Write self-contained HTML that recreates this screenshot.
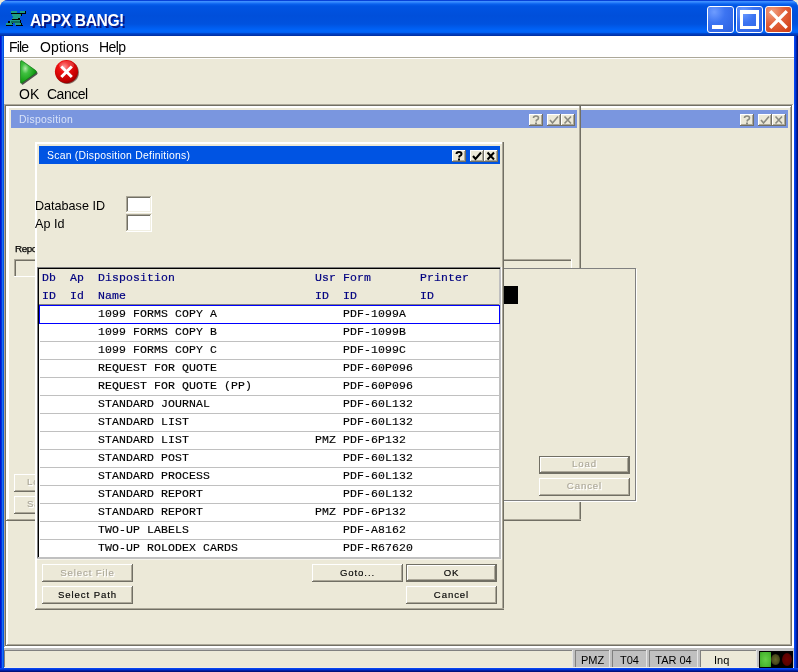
<!DOCTYPE html>
<html><head><meta charset="utf-8"><style>
html,body{margin:0;padding:0;}
body{width:798px;height:672px;position:relative;overflow:hidden;background:#ECE9D8;}
div{position:absolute;box-sizing:border-box;}
.t{white-space:pre;will-change:transform;}
</style></head><body>
<div style="left:0;top:0;width:798px;height:672px;border-radius:8px 8px 0 0;background:#0855DD;"></div>
<div style="left:0px;top:30px;width:1px;height:642px;background:#0014CC;"></div>
<div style="left:1px;top:30px;width:1px;height:642px;background:#0030DC;"></div>
<div style="left:2px;top:30px;width:1px;height:642px;background:#1A6EF2;"></div>
<div style="left:3px;top:30px;width:1px;height:642px;background:#0052E6;"></div>
<div style="left:794px;top:30px;width:1px;height:642px;background:#0546F2;"></div>
<div style="left:795px;top:30px;width:1px;height:642px;background:#0038D8;"></div>
<div style="left:796px;top:30px;width:1px;height:642px;background:#0020A8;"></div>
<div style="left:797px;top:30px;width:1px;height:642px;background:#00127A;"></div>
<div style="left:0;top:0;width:798px;height:36px;border-radius:8px 8px 0 0;background:linear-gradient(to bottom,#0842D8 0px,#0842D8 0.5px,#3D8FFF 1.5px,#2B80FB 2.5px,#0A62EE 4px,#0054E2 6px,#004FDA 16px,#0052DE 24px,#005EF0 28px,#0066FC 31px,#0060F2 32.5px,#0046CC 33.5px,#0032A8 35.5px);"></div>
<div style="left:0;top:668px;width:798px;height:4px;background:linear-gradient(to bottom,#0844F0 0,#0844F0 0.5px,#0036D8 1.5px,#0020A8 2.5px,#00127A 3.5px);"></div>
<svg style="position:absolute;left:0;top:0" width="30" height="30" viewBox="0 0 30 30" shape-rendering="crispEdges"><rect x="11" y="11" width="6" height="2" fill="#1E9C86"/><rect x="20" y="11" width="5" height="2" fill="#1E9C86"/><rect x="12" y="14" width="9" height="2" fill="#1E9C86"/><rect x="13" y="16" width="7" height="2" fill="#1E9C86"/><rect x="12" y="18" width="6" height="1" fill="#1E9C86"/><rect x="10" y="20" width="10" height="3" fill="#1E9C86"/><rect x="6" y="23" width="6" height="2" fill="#1E9C86"/><rect x="15" y="23" width="6" height="2" fill="#1E9C86"/><rect x="11" y="21" width="9" height="2" fill="#0E6A5A"/><rect x="11" y="13" width="7" height="1" fill="#000"/><rect x="18" y="13" width="8" height="1" fill="#000"/><rect x="25" y="11" width="1" height="2" fill="#000"/><rect x="21" y="14" width="1" height="2" fill="#000"/><rect x="18" y="18" width="2" height="1" fill="#000"/><rect x="12" y="19" width="8" height="1" fill="#000"/><rect x="8" y="21" width="2" height="2" fill="#000"/><rect x="20" y="20" width="1" height="3" fill="#000"/><rect x="6" y="25" width="7" height="1" fill="#000"/><rect x="16" y="25" width="7" height="1" fill="#000"/><rect x="21" y="23" width="1" height="2" fill="#000"/><rect x="12" y="23" width="1" height="1" fill="#000"/></svg>
<div class="t" style="left:31px;top:14.29px;font-family:'Liberation Sans', sans-serif;font-size:15.6px;line-height:15.6px;color:#0A1883;font-weight:bold;transform:translate(1px,1px);letter-spacing:-0.4px;">APPX BANG!</div>
<div class="t" style="left:30px;top:13.29px;font-family:'Liberation Sans', sans-serif;font-size:15.6px;line-height:15.6px;color:#FFFFFF;font-weight:bold;letter-spacing:-0.4px;">APPX BANG!</div>
<div style="left:707px;top:6px;width:27px;height:27px;border:1px solid #FFFFFF;border-radius:3px;background:radial-gradient(circle at 25% 20%,#6E9CFF 0,#3C74F2 40%,#2A5FE0 100%);"></div>
<div style="left:736px;top:6px;width:27px;height:27px;border:1px solid #FFFFFF;border-radius:3px;background:radial-gradient(circle at 25% 20%,#6E9CFF 0,#3C74F2 40%,#2A5FE0 100%);"></div>
<div style="left:765px;top:6px;width:27px;height:27px;border:1px solid #FFFFFF;border-radius:3px;background:radial-gradient(circle at 25% 20%,#F0A080 0,#E2603A 45%,#CC3A10 100%);"></div>
<div style="left:712px;top:25px;width:11px;height:4px;background:#FFFFFF;"></div>
<div style="left:740px;top:10px;width:19px;height:19px;border:3px solid #FFFFFF;border-top-width:4px;"></div>
<svg style="position:absolute;left:765px;top:6px" width="27" height="27" viewBox="0 0 27 27">
<path d="M5.2 5.2 L21.8 21.8 M21.8 5.2 L5.2 21.8" stroke="#FFFFFF" stroke-width="3.3"/></svg>
<div style="left:4px;top:36px;width:790px;height:21px;background:#FFFFFF;"></div>
<div class="t" style="left:9px;top:40.15px;font-family:'Liberation Sans', sans-serif;font-size:14px;line-height:14px;color:#000;font-weight:normal;letter-spacing:-0.8px;">File</div>
<div class="t" style="left:40px;top:40.15px;font-family:'Liberation Sans', sans-serif;font-size:14px;line-height:14px;color:#000;font-weight:normal;letter-spacing:0.1px;">Options</div>
<div class="t" style="left:99px;top:40.15px;font-family:'Liberation Sans', sans-serif;font-size:14px;line-height:14px;color:#000;font-weight:normal;letter-spacing:-0.6px;">Help</div>
<div style="left:4px;top:57px;width:790px;height:1px;background:#ACA899;"></div>
<div style="left:4px;top:58px;width:790px;height:1px;background:#FFFFFF;"></div>
<div style="left:4px;top:59px;width:790px;height:45px;background:#ECE9D8;"></div>
<svg style="position:absolute;left:16px;top:58px" width="28" height="30" viewBox="0 0 28 30">
<defs><radialGradient id="gg" cx="0.3" cy="0.35" r="0.75"><stop offset="0" stop-color="#B0E8A8"/><stop offset="0.3" stop-color="#40C040"/><stop offset="0.75" stop-color="#18A018"/><stop offset="1" stop-color="#0A8010"/></radialGradient></defs>
<path d="M4.5 3.8 Q4.5 2.0 6.3 3.0 L19.8 12.6 Q21.2 13.9 19.8 15.1 L6.3 24.7 Q4.5 26.1 4.5 24.3 Z" fill="#404040" transform="translate(1.2,1.5)" opacity="0.9"/>
<path d="M4.5 3.8 Q4.5 2.0 6.3 3.0 L19.8 12.6 Q21.2 13.9 19.8 15.1 L6.3 24.7 Q4.5 26.1 4.5 24.3 Z" fill="url(#gg)" stroke="#0C7A10" stroke-width="0.7"/>
</svg>
<svg style="position:absolute;left:52px;top:57px" width="30" height="30" viewBox="0 0 30 30">
<defs><radialGradient id="rg" cx="0.4" cy="0.3" r="0.75"><stop offset="0" stop-color="#FF8080"/><stop offset="0.3" stop-color="#F01010"/><stop offset="0.8" stop-color="#C00000"/><stop offset="1" stop-color="#800000"/></radialGradient></defs>
<circle cx="15.3" cy="15.4" r="11.6" fill="#3A1A14" opacity="0.6"/>
<circle cx="14.5" cy="14.6" r="11.6" fill="url(#rg)"/><ellipse cx="14.5" cy="8.2" rx="7.5" ry="4.2" fill="#FFFFFF" opacity="0.18"/>
<path d="M9.3 9.5 L19.8 20 M19.8 9.5 L9.3 20" stroke="#FFFFFF" stroke-width="3" stroke-linecap="butt"/>
</svg>
<div class="t" style="left:19px;top:86.65px;font-family:'Liberation Sans', sans-serif;font-size:14px;line-height:14px;color:#000;font-weight:normal;letter-spacing:0.1px;">OK</div>
<div class="t" style="left:47px;top:86.65px;font-family:'Liberation Sans', sans-serif;font-size:14px;line-height:14px;color:#000;font-weight:normal;letter-spacing:-0.5px;">Cancel</div>
<div style="left:4px;top:104px;width:790px;height:1px;background:#ACA899;"></div>
<div style="left:4px;top:105px;width:790px;height:1px;background:#716F64;"></div>
<div style="left:4px;top:104px;width:1px;height:544px;background:#ACA899;"></div>
<div style="left:5px;top:105px;width:1px;height:542px;background:#716F64;"></div>
<div style="left:4px;top:647px;width:790px;height:1px;background:#FFFFFF;"></div>
<div style="left:5px;top:646px;width:788px;height:1px;background:#FFFFFF;"></div>
<div style="left:793px;top:104px;width:1px;height:544px;background:#FFFFFF;"></div>
<div style="left:792px;top:105px;width:1px;height:542px;background:#FFFFFF;"></div>
<div style="left:6px;top:106px;width:786px;height:540px;background:#ECE9D8;"></div>
<div style="left:6px;top:106px;width:786px;height:1px;background:#FFFFFF;"></div>
<div style="left:6px;top:107px;width:785px;height:1px;background:#FFFFFF;"></div>
<div style="left:6px;top:106px;width:1px;height:540px;background:#FFFFFF;"></div>
<div style="left:7px;top:106px;width:1px;height:539px;background:#FFFFFF;"></div>
<div style="left:8px;top:108px;width:1px;height:413px;background:#FFFFFF;"></div>
<div style="left:6px;top:645px;width:786px;height:1px;background:#716F64;"></div>
<div style="left:7px;top:644px;width:784px;height:1px;background:#ACA899;"></div>
<div style="left:791px;top:106px;width:1px;height:540px;background:#716F64;"></div>
<div style="left:790px;top:107px;width:1px;height:538px;background:#ACA899;"></div>
<div style="left:581px;top:110px;width:207px;height:18px;background:#7A96DF;"></div>
<div style="left:772px;top:114px;width:14px;height:12px;background:#ECE9D8;"></div>
<div style="left:772px;top:114px;width:14px;height:1px;background:#FFFFFF;"></div>
<div style="left:772px;top:114px;width:1px;height:12px;background:#FFFFFF;"></div>
<div style="left:772px;top:125px;width:14px;height:1px;background:#716F64;"></div>
<div style="left:785px;top:114px;width:1px;height:12px;background:#716F64;"></div>
<div style="left:784px;top:115px;width:1px;height:10px;background:#ACA899;"></div>
<div style="left:773px;top:124px;width:12px;height:1px;background:#ACA899;"></div>
<svg style="position:absolute;left:772px;top:114px" width="14" height="12" viewBox="0 0 14 12"><path d="M3.5 2.5 L10 9.5 M10 2.5 L3.5 9.5" stroke="#8A8A80" stroke-width="1.6"/></svg>
<div style="left:758px;top:114px;width:14px;height:12px;background:#ECE9D8;"></div>
<div style="left:758px;top:114px;width:14px;height:1px;background:#FFFFFF;"></div>
<div style="left:758px;top:114px;width:1px;height:12px;background:#FFFFFF;"></div>
<div style="left:758px;top:125px;width:14px;height:1px;background:#716F64;"></div>
<div style="left:771px;top:114px;width:1px;height:12px;background:#716F64;"></div>
<div style="left:770px;top:115px;width:1px;height:10px;background:#ACA899;"></div>
<div style="left:759px;top:124px;width:12px;height:1px;background:#ACA899;"></div>
<svg style="position:absolute;left:758px;top:114px" width="14" height="12" viewBox="0 0 14 12"><path d="M3 6 L5.5 9 L11 2.5" fill="none" stroke="#8A8A80" stroke-width="1.6"/></svg>
<div style="left:740px;top:114px;width:14px;height:12px;background:#ECE9D8;"></div>
<div style="left:740px;top:114px;width:14px;height:1px;background:#FFFFFF;"></div>
<div style="left:740px;top:114px;width:1px;height:12px;background:#FFFFFF;"></div>
<div style="left:740px;top:125px;width:14px;height:1px;background:#716F64;"></div>
<div style="left:753px;top:114px;width:1px;height:12px;background:#716F64;"></div>
<div style="left:752px;top:115px;width:1px;height:10px;background:#ACA899;"></div>
<div style="left:741px;top:124px;width:12px;height:1px;background:#ACA899;"></div>
<svg style="position:absolute;left:740px;top:114px" width="14" height="12" viewBox="0 0 14 12"><path d="M4.5 4 Q4.5 2 7 2 Q9.5 2 9.5 4 Q9.5 5.3 7.5 6.2 L7 7.5" fill="none" stroke="#8A8A80" stroke-width="1.6"/><rect x="6" y="8.5" width="2" height="2" fill="#8A8A80"/></svg>
<div style="left:579px;top:106px;width:1px;height:415px;background:#ACA899;"></div>
<div style="left:580px;top:106px;width:1px;height:415px;background:#716F64;"></div>
<div style="left:7px;top:519px;width:574px;height:1px;background:#ACA899;"></div>
<div style="left:6px;top:520px;width:575px;height:1px;background:#716F64;"></div>
<div style="left:11px;top:110px;width:566px;height:18px;background:#7A96DF;"></div>
<div class="t" style="left:18.5px;top:115.19px;font-family:'Liberation Sans', sans-serif;font-size:10.4px;line-height:10.4px;color:#D8E2F8;font-weight:normal;letter-spacing:0.3px;">Disposition</div>
<div style="left:561px;top:114px;width:14px;height:12px;background:#ECE9D8;"></div>
<div style="left:561px;top:114px;width:14px;height:1px;background:#FFFFFF;"></div>
<div style="left:561px;top:114px;width:1px;height:12px;background:#FFFFFF;"></div>
<div style="left:561px;top:125px;width:14px;height:1px;background:#716F64;"></div>
<div style="left:574px;top:114px;width:1px;height:12px;background:#716F64;"></div>
<div style="left:573px;top:115px;width:1px;height:10px;background:#ACA899;"></div>
<div style="left:562px;top:124px;width:12px;height:1px;background:#ACA899;"></div>
<svg style="position:absolute;left:561px;top:114px" width="14" height="12" viewBox="0 0 14 12"><path d="M3.5 2.5 L10 9.5 M10 2.5 L3.5 9.5" stroke="#8A8A80" stroke-width="1.6"/></svg>
<div style="left:547px;top:114px;width:14px;height:12px;background:#ECE9D8;"></div>
<div style="left:547px;top:114px;width:14px;height:1px;background:#FFFFFF;"></div>
<div style="left:547px;top:114px;width:1px;height:12px;background:#FFFFFF;"></div>
<div style="left:547px;top:125px;width:14px;height:1px;background:#716F64;"></div>
<div style="left:560px;top:114px;width:1px;height:12px;background:#716F64;"></div>
<div style="left:559px;top:115px;width:1px;height:10px;background:#ACA899;"></div>
<div style="left:548px;top:124px;width:12px;height:1px;background:#ACA899;"></div>
<svg style="position:absolute;left:547px;top:114px" width="14" height="12" viewBox="0 0 14 12"><path d="M3 6 L5.5 9 L11 2.5" fill="none" stroke="#8A8A80" stroke-width="1.6"/></svg>
<div style="left:529px;top:114px;width:14px;height:12px;background:#ECE9D8;"></div>
<div style="left:529px;top:114px;width:14px;height:1px;background:#FFFFFF;"></div>
<div style="left:529px;top:114px;width:1px;height:12px;background:#FFFFFF;"></div>
<div style="left:529px;top:125px;width:14px;height:1px;background:#716F64;"></div>
<div style="left:542px;top:114px;width:1px;height:12px;background:#716F64;"></div>
<div style="left:541px;top:115px;width:1px;height:10px;background:#ACA899;"></div>
<div style="left:530px;top:124px;width:12px;height:1px;background:#ACA899;"></div>
<svg style="position:absolute;left:529px;top:114px" width="14" height="12" viewBox="0 0 14 12"><path d="M4.5 4 Q4.5 2 7 2 Q9.5 2 9.5 4 Q9.5 5.3 7.5 6.2 L7 7.5" fill="none" stroke="#8A8A80" stroke-width="1.6"/><rect x="6" y="8.5" width="2" height="2" fill="#8A8A80"/></svg>
<div class="t" style="left:15px;top:243.70px;font-family:'Liberation Sans', sans-serif;font-size:9.8px;line-height:9.8px;color:#000;font-weight:normal;letter-spacing:-0.4px;-webkit-text-stroke:0.25px #000;">Repo</div>
<div style="left:14px;top:259px;width:558px;height:18px;background:#ECE9D8;"></div>
<div style="left:14px;top:259px;width:558px;height:1px;background:#ACA899;"></div>
<div style="left:15px;top:260px;width:556px;height:1px;background:#716F64;"></div>
<div style="left:14px;top:259px;width:1px;height:18px;background:#ACA899;"></div>
<div style="left:15px;top:260px;width:1px;height:16px;background:#716F64;"></div>
<div style="left:14px;top:276px;width:558px;height:1px;background:#FFFFFF;"></div>
<div style="left:571px;top:259px;width:1px;height:18px;background:#FFFFFF;"></div>
<div style="left:14px;top:474px;width:60px;height:18px;background:#ECE9D8;"></div>
<div style="left:14px;top:474px;width:60px;height:1px;background:#FFFFFF;"></div>
<div style="left:14px;top:474px;width:1px;height:18px;background:#FFFFFF;"></div>
<div style="left:14px;top:491px;width:60px;height:1px;background:#716F64;"></div>
<div style="left:73px;top:474px;width:1px;height:18px;background:#716F64;"></div>
<div style="left:15px;top:490px;width:58px;height:1px;background:#ACA899;"></div>
<div style="left:72px;top:475px;width:1px;height:16px;background:#ACA899;"></div>
<div class="t" style="left:27px;top:478.37px;font-family:'Liberation Sans', sans-serif;font-size:9.6px;line-height:9.6px;color:#FFFFFF;font-weight:normal;letter-spacing:0.9px;transform:translateX(1px);-webkit-text-stroke:0.35px #FFF;">Load</div>
<div class="t" style="left:27px;top:477.37px;font-family:'Liberation Sans', sans-serif;font-size:9.6px;line-height:9.6px;color:#ACA899;font-weight:normal;letter-spacing:0.9px;-webkit-text-stroke:0.15px #ACA899;">Load</div>
<div style="left:14px;top:496px;width:60px;height:18px;background:#ECE9D8;"></div>
<div style="left:14px;top:496px;width:60px;height:1px;background:#FFFFFF;"></div>
<div style="left:14px;top:496px;width:1px;height:18px;background:#FFFFFF;"></div>
<div style="left:14px;top:513px;width:60px;height:1px;background:#716F64;"></div>
<div style="left:73px;top:496px;width:1px;height:18px;background:#716F64;"></div>
<div style="left:15px;top:512px;width:58px;height:1px;background:#ACA899;"></div>
<div style="left:72px;top:497px;width:1px;height:16px;background:#ACA899;"></div>
<div class="t" style="left:27px;top:500.37px;font-family:'Liberation Sans', sans-serif;font-size:9.6px;line-height:9.6px;color:#FFFFFF;font-weight:normal;letter-spacing:0.9px;transform:translateX(1px);-webkit-text-stroke:0.35px #FFF;">Save</div>
<div class="t" style="left:27px;top:499.37px;font-family:'Liberation Sans', sans-serif;font-size:9.6px;line-height:9.6px;color:#ACA899;font-weight:normal;letter-spacing:0.9px;-webkit-text-stroke:0.15px #ACA899;">Save</div>
<div style="left:40px;top:268px;width:596px;height:234px;border:1px solid #FFFFFF;left:41px;top:269px;width:596px;height:233px;"></div>
<div style="left:40px;top:268px;width:596px;height:233px;background:#ECE9D8;border:1px solid #808080;"></div>
<div style="left:504px;top:286px;width:14px;height:18px;background:#000000;"></div>
<div style="left:539px;top:456px;width:91px;height:18px;background:#716F64;"></div>
<div style="left:540px;top:457px;width:89px;height:16px;background:#ECE9D8;"></div>
<div style="left:540px;top:457px;width:89px;height:1px;background:#FFFFFF;"></div>
<div style="left:540px;top:457px;width:1px;height:16px;background:#FFFFFF;"></div>
<div style="left:540px;top:472px;width:89px;height:1px;background:#716F64;"></div>
<div style="left:628px;top:457px;width:1px;height:16px;background:#716F64;"></div>
<div style="left:541px;top:471px;width:87px;height:1px;background:#ACA899;"></div>
<div style="left:627px;top:458px;width:1px;height:14px;background:#ACA899;"></div>
<div class="t" style="left:539px;width:91px;text-align:center;top:459.87px;font-family:'Liberation Sans', sans-serif;font-size:9.6px;line-height:9.6px;color:#FFFFFF;font-weight:normal;letter-spacing:0.9px;transform:translateX(1px);-webkit-text-stroke:0.35px #FFF;">Load</div>
<div class="t" style="left:539px;width:91px;text-align:center;top:458.87px;font-family:'Liberation Sans', sans-serif;font-size:9.6px;line-height:9.6px;color:#ACA899;font-weight:normal;letter-spacing:0.9px;-webkit-text-stroke:0.15px #ACA899;">Load</div>
<div style="left:539px;top:478px;width:91px;height:18px;background:#ECE9D8;"></div>
<div style="left:539px;top:478px;width:91px;height:1px;background:#FFFFFF;"></div>
<div style="left:539px;top:478px;width:1px;height:18px;background:#FFFFFF;"></div>
<div style="left:539px;top:495px;width:91px;height:1px;background:#716F64;"></div>
<div style="left:629px;top:478px;width:1px;height:18px;background:#716F64;"></div>
<div style="left:540px;top:494px;width:89px;height:1px;background:#ACA899;"></div>
<div style="left:628px;top:479px;width:1px;height:16px;background:#ACA899;"></div>
<div class="t" style="left:539px;width:91px;text-align:center;top:481.87px;font-family:'Liberation Sans', sans-serif;font-size:9.6px;line-height:9.6px;color:#FFFFFF;font-weight:normal;letter-spacing:0.9px;transform:translateX(1px);-webkit-text-stroke:0.35px #FFF;">Cancel</div>
<div class="t" style="left:539px;width:91px;text-align:center;top:480.87px;font-family:'Liberation Sans', sans-serif;font-size:9.6px;line-height:9.6px;color:#ACA899;font-weight:normal;letter-spacing:0.9px;-webkit-text-stroke:0.15px #ACA899;">Cancel</div>
<div style="left:35px;top:142px;width:469px;height:468px;background:#ECE9D8;"></div>
<div style="left:35px;top:142px;width:468px;height:1px;background:#FFFFFF;"></div>
<div style="left:35px;top:143px;width:467px;height:1px;background:#FFFFFF;"></div>
<div style="left:35px;top:142px;width:1px;height:467px;background:#FFFFFF;"></div>
<div style="left:36px;top:142px;width:1px;height:466px;background:#FFFFFF;"></div>
<div style="left:502px;top:142px;width:1px;height:468px;background:#ACA899;"></div>
<div style="left:503px;top:142px;width:1px;height:468px;background:#716F64;"></div>
<div style="left:36px;top:608px;width:468px;height:1px;background:#ACA899;"></div>
<div style="left:35px;top:609px;width:469px;height:1px;background:#716F64;"></div>
<div style="left:39px;top:146px;width:461px;height:18px;background:#0054E3;"></div>
<div class="t" style="left:46.5px;top:151.19px;font-family:'Liberation Sans', sans-serif;font-size:10.4px;line-height:10.4px;color:#FFFFFF;font-weight:normal;letter-spacing:0.25px;">Scan (Disposition Definitions)</div>
<div style="left:484px;top:150px;width:14px;height:12px;background:#ECE9D8;"></div>
<div style="left:484px;top:150px;width:14px;height:1px;background:#FFFFFF;"></div>
<div style="left:484px;top:150px;width:1px;height:12px;background:#FFFFFF;"></div>
<div style="left:484px;top:161px;width:14px;height:1px;background:#716F64;"></div>
<div style="left:497px;top:150px;width:1px;height:12px;background:#716F64;"></div>
<div style="left:496px;top:151px;width:1px;height:10px;background:#ACA899;"></div>
<div style="left:485px;top:160px;width:12px;height:1px;background:#ACA899;"></div>
<svg style="position:absolute;left:484px;top:150px" width="14" height="12" viewBox="0 0 14 12"><path d="M3.5 2.5 L10 9.5 M10 2.5 L3.5 9.5" stroke="#000" stroke-width="2"/></svg>
<div style="left:470px;top:150px;width:14px;height:12px;background:#ECE9D8;"></div>
<div style="left:470px;top:150px;width:14px;height:1px;background:#FFFFFF;"></div>
<div style="left:470px;top:150px;width:1px;height:12px;background:#FFFFFF;"></div>
<div style="left:470px;top:161px;width:14px;height:1px;background:#716F64;"></div>
<div style="left:483px;top:150px;width:1px;height:12px;background:#716F64;"></div>
<div style="left:482px;top:151px;width:1px;height:10px;background:#ACA899;"></div>
<div style="left:471px;top:160px;width:12px;height:1px;background:#ACA899;"></div>
<svg style="position:absolute;left:470px;top:150px" width="14" height="12" viewBox="0 0 14 12"><path d="M3 6 L5.5 9 L11 2.5" fill="none" stroke="#000" stroke-width="2"/></svg>
<div style="left:452px;top:150px;width:14px;height:12px;background:#ECE9D8;"></div>
<div style="left:452px;top:150px;width:14px;height:1px;background:#FFFFFF;"></div>
<div style="left:452px;top:150px;width:1px;height:12px;background:#FFFFFF;"></div>
<div style="left:452px;top:161px;width:14px;height:1px;background:#716F64;"></div>
<div style="left:465px;top:150px;width:1px;height:12px;background:#716F64;"></div>
<div style="left:464px;top:151px;width:1px;height:10px;background:#ACA899;"></div>
<div style="left:453px;top:160px;width:12px;height:1px;background:#ACA899;"></div>
<svg style="position:absolute;left:452px;top:150px" width="14" height="12" viewBox="0 0 14 12"><path d="M4.5 4 Q4.5 2 7 2 Q9.5 2 9.5 4 Q9.5 5.3 7.5 6.2 L7 7.5" fill="none" stroke="#000" stroke-width="2"/><rect x="6" y="8.5" width="2" height="2" fill="#000"/></svg>
<div class="t" style="left:35px;top:200.13px;font-family:'Liberation Sans', sans-serif;font-size:12.6px;line-height:12.6px;color:#000;font-weight:normal;">Database ID</div>
<div class="t" style="left:35px;top:218.13px;font-family:'Liberation Sans', sans-serif;font-size:12.6px;line-height:12.6px;color:#000;font-weight:normal;">Ap Id</div>
<div style="left:126px;top:196px;width:26px;height:17px;background:#FFFFFF;"></div>
<div style="left:126px;top:196px;width:26px;height:1px;background:#ACA899;"></div>
<div style="left:126px;top:196px;width:1px;height:17px;background:#ACA899;"></div>
<div style="left:127px;top:197px;width:24px;height:1px;background:#716F64;"></div>
<div style="left:127px;top:197px;width:1px;height:15px;background:#716F64;"></div>
<div style="left:126px;top:212px;width:26px;height:1px;background:#FFFFFF;"></div>
<div style="left:151px;top:196px;width:1px;height:17px;background:#FFFFFF;"></div>
<div style="left:127px;top:211px;width:24px;height:1px;background:#F1EFE2;"></div>
<div style="left:150px;top:197px;width:1px;height:15px;background:#F1EFE2;"></div>
<div style="left:126px;top:214px;width:26px;height:18px;background:#FFFFFF;"></div>
<div style="left:126px;top:214px;width:26px;height:1px;background:#ACA899;"></div>
<div style="left:126px;top:214px;width:1px;height:18px;background:#ACA899;"></div>
<div style="left:127px;top:215px;width:24px;height:1px;background:#716F64;"></div>
<div style="left:127px;top:215px;width:1px;height:16px;background:#716F64;"></div>
<div style="left:126px;top:231px;width:26px;height:1px;background:#FFFFFF;"></div>
<div style="left:151px;top:214px;width:1px;height:18px;background:#FFFFFF;"></div>
<div style="left:127px;top:230px;width:24px;height:1px;background:#F1EFE2;"></div>
<div style="left:150px;top:215px;width:1px;height:16px;background:#F1EFE2;"></div>
<div style="left:37px;top:267px;width:465px;height:292px;background:#FFFFFF;"></div>
<div style="left:37px;top:267px;width:464px;height:1px;background:#808080;"></div>
<div style="left:37px;top:267px;width:1px;height:292px;background:#808080;"></div>
<div style="left:38px;top:268px;width:462px;height:1px;background:#000000;"></div>
<div style="left:38px;top:268px;width:1px;height:290px;background:#000000;"></div>
<div style="left:499px;top:269px;width:1px;height:290px;background:#C0C0C0;"></div>
<div style="left:500px;top:267px;width:1px;height:292px;background:#C0C0C0;"></div>
<div style="left:38px;top:557px;width:463px;height:1px;background:#C0C0C0;"></div>
<div style="left:37px;top:558px;width:464px;height:1px;background:#C0C0C0;"></div>
<div style="left:501px;top:267px;width:1px;height:293px;background:#FFFFFF;"></div>
<div style="left:37px;top:559px;width:465px;height:1px;background:#F6F4EC;"></div>
<div style="left:39px;top:269px;width:460px;height:35px;background:#ECE9D8;"></div>
<div style="left:39px;top:304px;width:460px;height:1px;background:#808080;"></div>
<div class="t" style="left:42px;top:271.99px;font-family:'Liberation Mono', monospace;font-size:11.5px;line-height:11.5px;color:#000080;font-weight:normal;letter-spacing:0.1px;-webkit-text-stroke:0.2px #000080;">Db</div>
<div class="t" style="left:42px;top:289.99px;font-family:'Liberation Mono', monospace;font-size:11.5px;line-height:11.5px;color:#000080;font-weight:normal;letter-spacing:0.1px;-webkit-text-stroke:0.2px #000080;">ID</div>
<div class="t" style="left:70px;top:271.99px;font-family:'Liberation Mono', monospace;font-size:11.5px;line-height:11.5px;color:#000080;font-weight:normal;letter-spacing:0.1px;-webkit-text-stroke:0.2px #000080;">Ap</div>
<div class="t" style="left:70px;top:289.99px;font-family:'Liberation Mono', monospace;font-size:11.5px;line-height:11.5px;color:#000080;font-weight:normal;letter-spacing:0.1px;-webkit-text-stroke:0.2px #000080;">Id</div>
<div class="t" style="left:98px;top:271.99px;font-family:'Liberation Mono', monospace;font-size:11.5px;line-height:11.5px;color:#000080;font-weight:normal;letter-spacing:0.1px;-webkit-text-stroke:0.2px #000080;">Disposition</div>
<div class="t" style="left:98px;top:289.99px;font-family:'Liberation Mono', monospace;font-size:11.5px;line-height:11.5px;color:#000080;font-weight:normal;letter-spacing:0.1px;-webkit-text-stroke:0.2px #000080;">Name</div>
<div class="t" style="left:315px;top:271.99px;font-family:'Liberation Mono', monospace;font-size:11.5px;line-height:11.5px;color:#000080;font-weight:normal;letter-spacing:0.1px;-webkit-text-stroke:0.2px #000080;">Usr</div>
<div class="t" style="left:315px;top:289.99px;font-family:'Liberation Mono', monospace;font-size:11.5px;line-height:11.5px;color:#000080;font-weight:normal;letter-spacing:0.1px;-webkit-text-stroke:0.2px #000080;">ID</div>
<div class="t" style="left:343px;top:271.99px;font-family:'Liberation Mono', monospace;font-size:11.5px;line-height:11.5px;color:#000080;font-weight:normal;letter-spacing:0.1px;-webkit-text-stroke:0.2px #000080;">Form</div>
<div class="t" style="left:343px;top:289.99px;font-family:'Liberation Mono', monospace;font-size:11.5px;line-height:11.5px;color:#000080;font-weight:normal;letter-spacing:0.1px;-webkit-text-stroke:0.2px #000080;">ID</div>
<div class="t" style="left:420px;top:271.99px;font-family:'Liberation Mono', monospace;font-size:11.5px;line-height:11.5px;color:#000080;font-weight:normal;letter-spacing:0.1px;-webkit-text-stroke:0.2px #000080;">Printer</div>
<div class="t" style="left:420px;top:289.99px;font-family:'Liberation Mono', monospace;font-size:11.5px;line-height:11.5px;color:#000080;font-weight:normal;letter-spacing:0.1px;-webkit-text-stroke:0.2px #000080;">ID</div>
<div class="t" style="left:98px;top:307.79px;font-family:'Liberation Mono', monospace;font-size:11.5px;line-height:11.5px;color:#000;font-weight:normal;letter-spacing:0.1px;-webkit-text-stroke:0.15px #000;">1099 FORMS COPY A</div>
<div class="t" style="left:343px;top:307.79px;font-family:'Liberation Mono', monospace;font-size:11.5px;line-height:11.5px;color:#000;font-weight:normal;letter-spacing:0.1px;-webkit-text-stroke:0.15px #000;">PDF-1099A</div>
<div style="left:40px;top:341px;width:459px;height:1px;background:#C0C0C0;"></div>
<div class="t" style="left:98px;top:325.79px;font-family:'Liberation Mono', monospace;font-size:11.5px;line-height:11.5px;color:#000;font-weight:normal;letter-spacing:0.1px;-webkit-text-stroke:0.15px #000;">1099 FORMS COPY B</div>
<div class="t" style="left:343px;top:325.79px;font-family:'Liberation Mono', monospace;font-size:11.5px;line-height:11.5px;color:#000;font-weight:normal;letter-spacing:0.1px;-webkit-text-stroke:0.15px #000;">PDF-1099B</div>
<div style="left:40px;top:359px;width:459px;height:1px;background:#C0C0C0;"></div>
<div class="t" style="left:98px;top:343.79px;font-family:'Liberation Mono', monospace;font-size:11.5px;line-height:11.5px;color:#000;font-weight:normal;letter-spacing:0.1px;-webkit-text-stroke:0.15px #000;">1099 FORMS COPY C</div>
<div class="t" style="left:343px;top:343.79px;font-family:'Liberation Mono', monospace;font-size:11.5px;line-height:11.5px;color:#000;font-weight:normal;letter-spacing:0.1px;-webkit-text-stroke:0.15px #000;">PDF-1099C</div>
<div style="left:40px;top:377px;width:459px;height:1px;background:#C0C0C0;"></div>
<div class="t" style="left:98px;top:361.79px;font-family:'Liberation Mono', monospace;font-size:11.5px;line-height:11.5px;color:#000;font-weight:normal;letter-spacing:0.1px;-webkit-text-stroke:0.15px #000;">REQUEST FOR QUOTE</div>
<div class="t" style="left:343px;top:361.79px;font-family:'Liberation Mono', monospace;font-size:11.5px;line-height:11.5px;color:#000;font-weight:normal;letter-spacing:0.1px;-webkit-text-stroke:0.15px #000;">PDF-60P096</div>
<div style="left:40px;top:395px;width:459px;height:1px;background:#C0C0C0;"></div>
<div class="t" style="left:98px;top:379.79px;font-family:'Liberation Mono', monospace;font-size:11.5px;line-height:11.5px;color:#000;font-weight:normal;letter-spacing:0.1px;-webkit-text-stroke:0.15px #000;">REQUEST FOR QUOTE (PP)</div>
<div class="t" style="left:343px;top:379.79px;font-family:'Liberation Mono', monospace;font-size:11.5px;line-height:11.5px;color:#000;font-weight:normal;letter-spacing:0.1px;-webkit-text-stroke:0.15px #000;">PDF-60P096</div>
<div style="left:40px;top:413px;width:459px;height:1px;background:#C0C0C0;"></div>
<div class="t" style="left:98px;top:397.79px;font-family:'Liberation Mono', monospace;font-size:11.5px;line-height:11.5px;color:#000;font-weight:normal;letter-spacing:0.1px;-webkit-text-stroke:0.15px #000;">STANDARD JOURNAL</div>
<div class="t" style="left:343px;top:397.79px;font-family:'Liberation Mono', monospace;font-size:11.5px;line-height:11.5px;color:#000;font-weight:normal;letter-spacing:0.1px;-webkit-text-stroke:0.15px #000;">PDF-60L132</div>
<div style="left:40px;top:431px;width:459px;height:1px;background:#C0C0C0;"></div>
<div class="t" style="left:98px;top:415.79px;font-family:'Liberation Mono', monospace;font-size:11.5px;line-height:11.5px;color:#000;font-weight:normal;letter-spacing:0.1px;-webkit-text-stroke:0.15px #000;">STANDARD LIST</div>
<div class="t" style="left:343px;top:415.79px;font-family:'Liberation Mono', monospace;font-size:11.5px;line-height:11.5px;color:#000;font-weight:normal;letter-spacing:0.1px;-webkit-text-stroke:0.15px #000;">PDF-60L132</div>
<div style="left:40px;top:449px;width:459px;height:1px;background:#C0C0C0;"></div>
<div class="t" style="left:98px;top:433.79px;font-family:'Liberation Mono', monospace;font-size:11.5px;line-height:11.5px;color:#000;font-weight:normal;letter-spacing:0.1px;-webkit-text-stroke:0.15px #000;">STANDARD LIST</div>
<div class="t" style="left:315px;top:433.79px;font-family:'Liberation Mono', monospace;font-size:11.5px;line-height:11.5px;color:#000;font-weight:normal;letter-spacing:0.1px;-webkit-text-stroke:0.15px #000;">PMZ</div>
<div class="t" style="left:343px;top:433.79px;font-family:'Liberation Mono', monospace;font-size:11.5px;line-height:11.5px;color:#000;font-weight:normal;letter-spacing:0.1px;-webkit-text-stroke:0.15px #000;">PDF-6P132</div>
<div style="left:40px;top:467px;width:459px;height:1px;background:#C0C0C0;"></div>
<div class="t" style="left:98px;top:451.79px;font-family:'Liberation Mono', monospace;font-size:11.5px;line-height:11.5px;color:#000;font-weight:normal;letter-spacing:0.1px;-webkit-text-stroke:0.15px #000;">STANDARD POST</div>
<div class="t" style="left:343px;top:451.79px;font-family:'Liberation Mono', monospace;font-size:11.5px;line-height:11.5px;color:#000;font-weight:normal;letter-spacing:0.1px;-webkit-text-stroke:0.15px #000;">PDF-60L132</div>
<div style="left:40px;top:485px;width:459px;height:1px;background:#C0C0C0;"></div>
<div class="t" style="left:98px;top:469.79px;font-family:'Liberation Mono', monospace;font-size:11.5px;line-height:11.5px;color:#000;font-weight:normal;letter-spacing:0.1px;-webkit-text-stroke:0.15px #000;">STANDARD PROCESS</div>
<div class="t" style="left:343px;top:469.79px;font-family:'Liberation Mono', monospace;font-size:11.5px;line-height:11.5px;color:#000;font-weight:normal;letter-spacing:0.1px;-webkit-text-stroke:0.15px #000;">PDF-60L132</div>
<div style="left:40px;top:503px;width:459px;height:1px;background:#C0C0C0;"></div>
<div class="t" style="left:98px;top:487.79px;font-family:'Liberation Mono', monospace;font-size:11.5px;line-height:11.5px;color:#000;font-weight:normal;letter-spacing:0.1px;-webkit-text-stroke:0.15px #000;">STANDARD REPORT</div>
<div class="t" style="left:343px;top:487.79px;font-family:'Liberation Mono', monospace;font-size:11.5px;line-height:11.5px;color:#000;font-weight:normal;letter-spacing:0.1px;-webkit-text-stroke:0.15px #000;">PDF-60L132</div>
<div style="left:40px;top:521px;width:459px;height:1px;background:#C0C0C0;"></div>
<div class="t" style="left:98px;top:505.79px;font-family:'Liberation Mono', monospace;font-size:11.5px;line-height:11.5px;color:#000;font-weight:normal;letter-spacing:0.1px;-webkit-text-stroke:0.15px #000;">STANDARD REPORT</div>
<div class="t" style="left:315px;top:505.79px;font-family:'Liberation Mono', monospace;font-size:11.5px;line-height:11.5px;color:#000;font-weight:normal;letter-spacing:0.1px;-webkit-text-stroke:0.15px #000;">PMZ</div>
<div class="t" style="left:343px;top:505.79px;font-family:'Liberation Mono', monospace;font-size:11.5px;line-height:11.5px;color:#000;font-weight:normal;letter-spacing:0.1px;-webkit-text-stroke:0.15px #000;">PDF-6P132</div>
<div style="left:40px;top:539px;width:459px;height:1px;background:#C0C0C0;"></div>
<div class="t" style="left:98px;top:523.79px;font-family:'Liberation Mono', monospace;font-size:11.5px;line-height:11.5px;color:#000;font-weight:normal;letter-spacing:0.1px;-webkit-text-stroke:0.15px #000;">TWO-UP LABELS</div>
<div class="t" style="left:343px;top:523.79px;font-family:'Liberation Mono', monospace;font-size:11.5px;line-height:11.5px;color:#000;font-weight:normal;letter-spacing:0.1px;-webkit-text-stroke:0.15px #000;">PDF-A8162</div>
<div class="t" style="left:98px;top:541.79px;font-family:'Liberation Mono', monospace;font-size:11.5px;line-height:11.5px;color:#000;font-weight:normal;letter-spacing:0.1px;-webkit-text-stroke:0.15px #000;">TWO-UP ROLODEX CARDS</div>
<div class="t" style="left:343px;top:541.79px;font-family:'Liberation Mono', monospace;font-size:11.5px;line-height:11.5px;color:#000;font-weight:normal;letter-spacing:0.1px;-webkit-text-stroke:0.15px #000;">PDF-R67620</div>
<div style="left:39px;top:305px;width:461px;height:19px;border:1px solid #0000FF;"></div>
<div style="left:42px;top:564px;width:91px;height:18px;background:#ECE9D8;"></div>
<div style="left:42px;top:564px;width:91px;height:1px;background:#FFFFFF;"></div>
<div style="left:42px;top:564px;width:1px;height:18px;background:#FFFFFF;"></div>
<div style="left:42px;top:581px;width:91px;height:1px;background:#716F64;"></div>
<div style="left:132px;top:564px;width:1px;height:18px;background:#716F64;"></div>
<div style="left:43px;top:580px;width:89px;height:1px;background:#ACA899;"></div>
<div style="left:131px;top:565px;width:1px;height:16px;background:#ACA899;"></div>
<div class="t" style="left:42px;width:91px;text-align:center;top:568.87px;font-family:'Liberation Sans', sans-serif;font-size:9.6px;line-height:9.6px;color:#FFFFFF;font-weight:normal;letter-spacing:0.9px;transform:translateX(1px);-webkit-text-stroke:0.35px #FFF;">Select File</div>
<div class="t" style="left:42px;width:91px;text-align:center;top:567.87px;font-family:'Liberation Sans', sans-serif;font-size:9.6px;line-height:9.6px;color:#ACA899;font-weight:normal;letter-spacing:0.9px;-webkit-text-stroke:0.15px #ACA899;">Select File</div>
<div style="left:42px;top:586px;width:91px;height:18px;background:#ECE9D8;"></div>
<div style="left:42px;top:586px;width:91px;height:1px;background:#FFFFFF;"></div>
<div style="left:42px;top:586px;width:1px;height:18px;background:#FFFFFF;"></div>
<div style="left:42px;top:603px;width:91px;height:1px;background:#716F64;"></div>
<div style="left:132px;top:586px;width:1px;height:18px;background:#716F64;"></div>
<div style="left:43px;top:602px;width:89px;height:1px;background:#ACA899;"></div>
<div style="left:131px;top:587px;width:1px;height:16px;background:#ACA899;"></div>
<div class="t" style="left:42px;width:91px;text-align:center;top:589.87px;font-family:'Liberation Sans', sans-serif;font-size:9.6px;line-height:9.6px;color:#000;font-weight:normal;letter-spacing:0.9px;-webkit-text-stroke:0.15px #000;">Select Path</div>
<div style="left:312px;top:564px;width:91px;height:18px;background:#ECE9D8;"></div>
<div style="left:312px;top:564px;width:91px;height:1px;background:#FFFFFF;"></div>
<div style="left:312px;top:564px;width:1px;height:18px;background:#FFFFFF;"></div>
<div style="left:312px;top:581px;width:91px;height:1px;background:#716F64;"></div>
<div style="left:402px;top:564px;width:1px;height:18px;background:#716F64;"></div>
<div style="left:313px;top:580px;width:89px;height:1px;background:#ACA899;"></div>
<div style="left:401px;top:565px;width:1px;height:16px;background:#ACA899;"></div>
<div class="t" style="left:312px;width:91px;text-align:center;top:567.87px;font-family:'Liberation Sans', sans-serif;font-size:9.6px;line-height:9.6px;color:#000;font-weight:normal;letter-spacing:0.9px;-webkit-text-stroke:0.15px #000;">Goto...</div>
<div style="left:406px;top:564px;width:91px;height:18px;background:#716F64;"></div>
<div style="left:407px;top:565px;width:89px;height:16px;background:#ECE9D8;"></div>
<div style="left:407px;top:565px;width:89px;height:1px;background:#FFFFFF;"></div>
<div style="left:407px;top:565px;width:1px;height:16px;background:#FFFFFF;"></div>
<div style="left:407px;top:580px;width:89px;height:1px;background:#716F64;"></div>
<div style="left:495px;top:565px;width:1px;height:16px;background:#716F64;"></div>
<div style="left:408px;top:579px;width:87px;height:1px;background:#ACA899;"></div>
<div style="left:494px;top:566px;width:1px;height:14px;background:#ACA899;"></div>
<div class="t" style="left:406px;width:91px;text-align:center;top:567.87px;font-family:'Liberation Sans', sans-serif;font-size:9.6px;line-height:9.6px;color:#000;font-weight:normal;letter-spacing:0.9px;-webkit-text-stroke:0.15px #000;">OK</div>
<div style="left:406px;top:586px;width:91px;height:18px;background:#ECE9D8;"></div>
<div style="left:406px;top:586px;width:91px;height:1px;background:#FFFFFF;"></div>
<div style="left:406px;top:586px;width:1px;height:18px;background:#FFFFFF;"></div>
<div style="left:406px;top:603px;width:91px;height:1px;background:#716F64;"></div>
<div style="left:496px;top:586px;width:1px;height:18px;background:#716F64;"></div>
<div style="left:407px;top:602px;width:89px;height:1px;background:#ACA899;"></div>
<div style="left:495px;top:587px;width:1px;height:16px;background:#ACA899;"></div>
<div class="t" style="left:406px;width:91px;text-align:center;top:589.87px;font-family:'Liberation Sans', sans-serif;font-size:9.6px;line-height:9.6px;color:#000;font-weight:normal;letter-spacing:0.9px;-webkit-text-stroke:0.15px #000;">Cancel</div>
<div style="left:4px;top:648px;width:790px;height:20px;background:#C0C0C0;"></div>
<div style="left:4px;top:650px;width:569px;height:18px;background:#ECE9D8;"></div>
<div style="left:4px;top:650px;width:569px;height:1px;background:#808080;"></div>
<div style="left:4px;top:650px;width:1px;height:18px;background:#808080;"></div>
<div style="left:572px;top:650px;width:1px;height:18px;background:#E4E4E4;"></div>
<div style="left:575px;top:650px;width:35px;height:18px;background:#C0C0C0;"></div>
<div style="left:575px;top:650px;width:35px;height:1px;background:#808080;"></div>
<div style="left:575px;top:650px;width:1px;height:18px;background:#808080;"></div>
<div style="left:609px;top:650px;width:1px;height:18px;background:#E4E4E4;"></div>
<div class="t" style="left:575px;width:35px;text-align:center;top:654.69px;font-family:'Liberation Sans', sans-serif;font-size:11px;line-height:11px;color:#000;">PMZ</div>
<div style="left:612px;top:650px;width:35px;height:18px;background:#C0C0C0;"></div>
<div style="left:612px;top:650px;width:35px;height:1px;background:#808080;"></div>
<div style="left:612px;top:650px;width:1px;height:18px;background:#808080;"></div>
<div style="left:646px;top:650px;width:1px;height:18px;background:#E4E4E4;"></div>
<div class="t" style="left:612px;width:35px;text-align:center;top:654.69px;font-family:'Liberation Sans', sans-serif;font-size:11px;line-height:11px;color:#000;">T04</div>
<div style="left:649px;top:650px;width:49px;height:18px;background:#C0C0C0;"></div>
<div style="left:649px;top:650px;width:49px;height:1px;background:#808080;"></div>
<div style="left:649px;top:650px;width:1px;height:18px;background:#808080;"></div>
<div style="left:697px;top:650px;width:1px;height:18px;background:#E4E4E4;"></div>
<div class="t" style="left:649px;width:49px;text-align:center;top:654.69px;font-family:'Liberation Sans', sans-serif;font-size:11px;line-height:11px;color:#000;">TAR 04</div>
<div style="left:700px;top:650px;width:57px;height:18px;background:#ECE9D8;"></div>
<div style="left:700px;top:650px;width:57px;height:1px;background:#808080;"></div>
<div style="left:700px;top:650px;width:1px;height:18px;background:#808080;"></div>
<div style="left:756px;top:650px;width:1px;height:18px;background:#E4E4E4;"></div>
<div class="t" style="left:714px;top:654.69px;font-family:'Liberation Sans', sans-serif;font-size:11px;line-height:11px;color:#000;font-weight:normal;">Inq</div>
<div style="left:4px;top:667px;width:790px;height:1px;background:#EFEDE2;"></div>
<div style="left:759px;top:651px;width:34px;height:17px;background:#000000;"></div>
<div style="left:760px;top:652px;width:11px;height:15px;background:radial-gradient(ellipse at 50% 50%,#66D048 0,#48B830 70%,#3A9A28 100%);"></div>
<div style="left:771px;top:654px;width:9px;height:11px;border-radius:50%;background:radial-gradient(ellipse,#66662A 0,#4A4A1C 55%,#141405 100%);"></div>
<div style="left:782px;top:653px;width:10px;height:13px;border-radius:50%;background:radial-gradient(ellipse,#700000 0,#5A0000 60%,#180000 100%);"></div>
</body></html>
